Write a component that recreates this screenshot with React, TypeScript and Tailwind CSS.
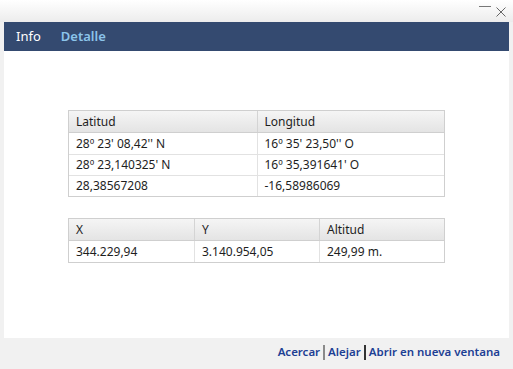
import React from 'react';

const latLon = [
  ['28º 23\' 08,42\'\' N', '16º 35\' 23,50\'\' O'],
  ['28º 23,140325\' N', '16º 35,391641\' O'],
  ['28,38567208', '-16,58986069'],
];

const utm = [['344.229,94', '3.140.954,05', '249,99 m.']];

const Table = ({ head, rows, cols }: { head: string[]; rows: string[][]; cols: string }) => (
  <div className="border border-[#cfcfcf] text-[12px] text-[#1e1e1e]">
    <div className={`grid ${cols} h-[22px] bg-gradient-to-b from-[#f5f5f5] to-[#e4e4e4] border-b border-[#cfcfcf]`}>
      {head.map((h, i) => (
        <div key={h} className={`flex items-center px-[7px] ${i > 0 ? 'border-l border-[#d4d4d4]' : ''}`}>{h}</div>
      ))}
    </div>
    {rows.map((r, ri) => (
      <div key={ri} className={`grid ${cols} h-[21px] ${ri > 0 ? 'border-t border-[#e2e2e2]' : ''}`}>
        {r.map((c, i) => (
          <div key={i} className={`flex items-center px-[7px] ${i > 0 ? 'border-l border-[#e2e2e2]' : ''}`}>{c}</div>
        ))}
      </div>
    ))}
  </div>
);

export default function App() {
  return (
    <div className="w-[513px] h-[369px] bg-[#f1f1f1] flex flex-col" style={{ fontFamily: '"Noto Sans", "Open Sans", sans-serif' }}>
      <div className="h-[22px] bg-gradient-to-b from-white to-[#ececec] flex justify-end items-start pr-[7px] gap-[5px] shrink-0">
        <div className="mt-[6px] w-[12px] h-[1px] bg-[#777]" />
        <svg width="10" height="10" viewBox="0 0 10 10" className="mt-[7px]">
          <path d="M0.5 0.5 L9.5 9.5 M9.5 0.5 L0.5 9.5" stroke="#666" strokeWidth="1" />
        </svg>
      </div>
      <div className="mx-[4px] h-[29px] bg-[#344a70] flex items-center gap-[20px] px-[12px] text-[13px] shrink-0">
        <span className="text-white">Info</span>
        <span className="text-[#8cc4ea] font-semibold">Detalle</span>
      </div>
      <div className="mx-[4px] h-[287px] bg-white flex flex-col items-center pt-[59px] gap-[21px] shrink-0">
        <div className="w-[377px]">
          <Table head={['Latitud', 'Longitud']} rows={latLon} cols="grid-cols-2" />
        </div>
        <div className="w-[377px]">
          <Table head={['X', 'Y', 'Altitud']} rows={utm} cols="grid-cols-3" />
        </div>
      </div>
      <div className="flex-1 flex justify-end items-center pr-[13px] pb-[3px] text-[11.5px] font-semibold text-[#1d3f94]">
        <span>Acercar</span>
        <span className="mx-[3px] w-[2px] h-[15px] bg-[#8a8a8a]" />
        <span>Alejar</span>
        <span className="mx-[3px] w-[2px] h-[15px] bg-[#333]" />
        <span>Abrir en nueva ventana</span>
      </div>
    </div>
  );
}
